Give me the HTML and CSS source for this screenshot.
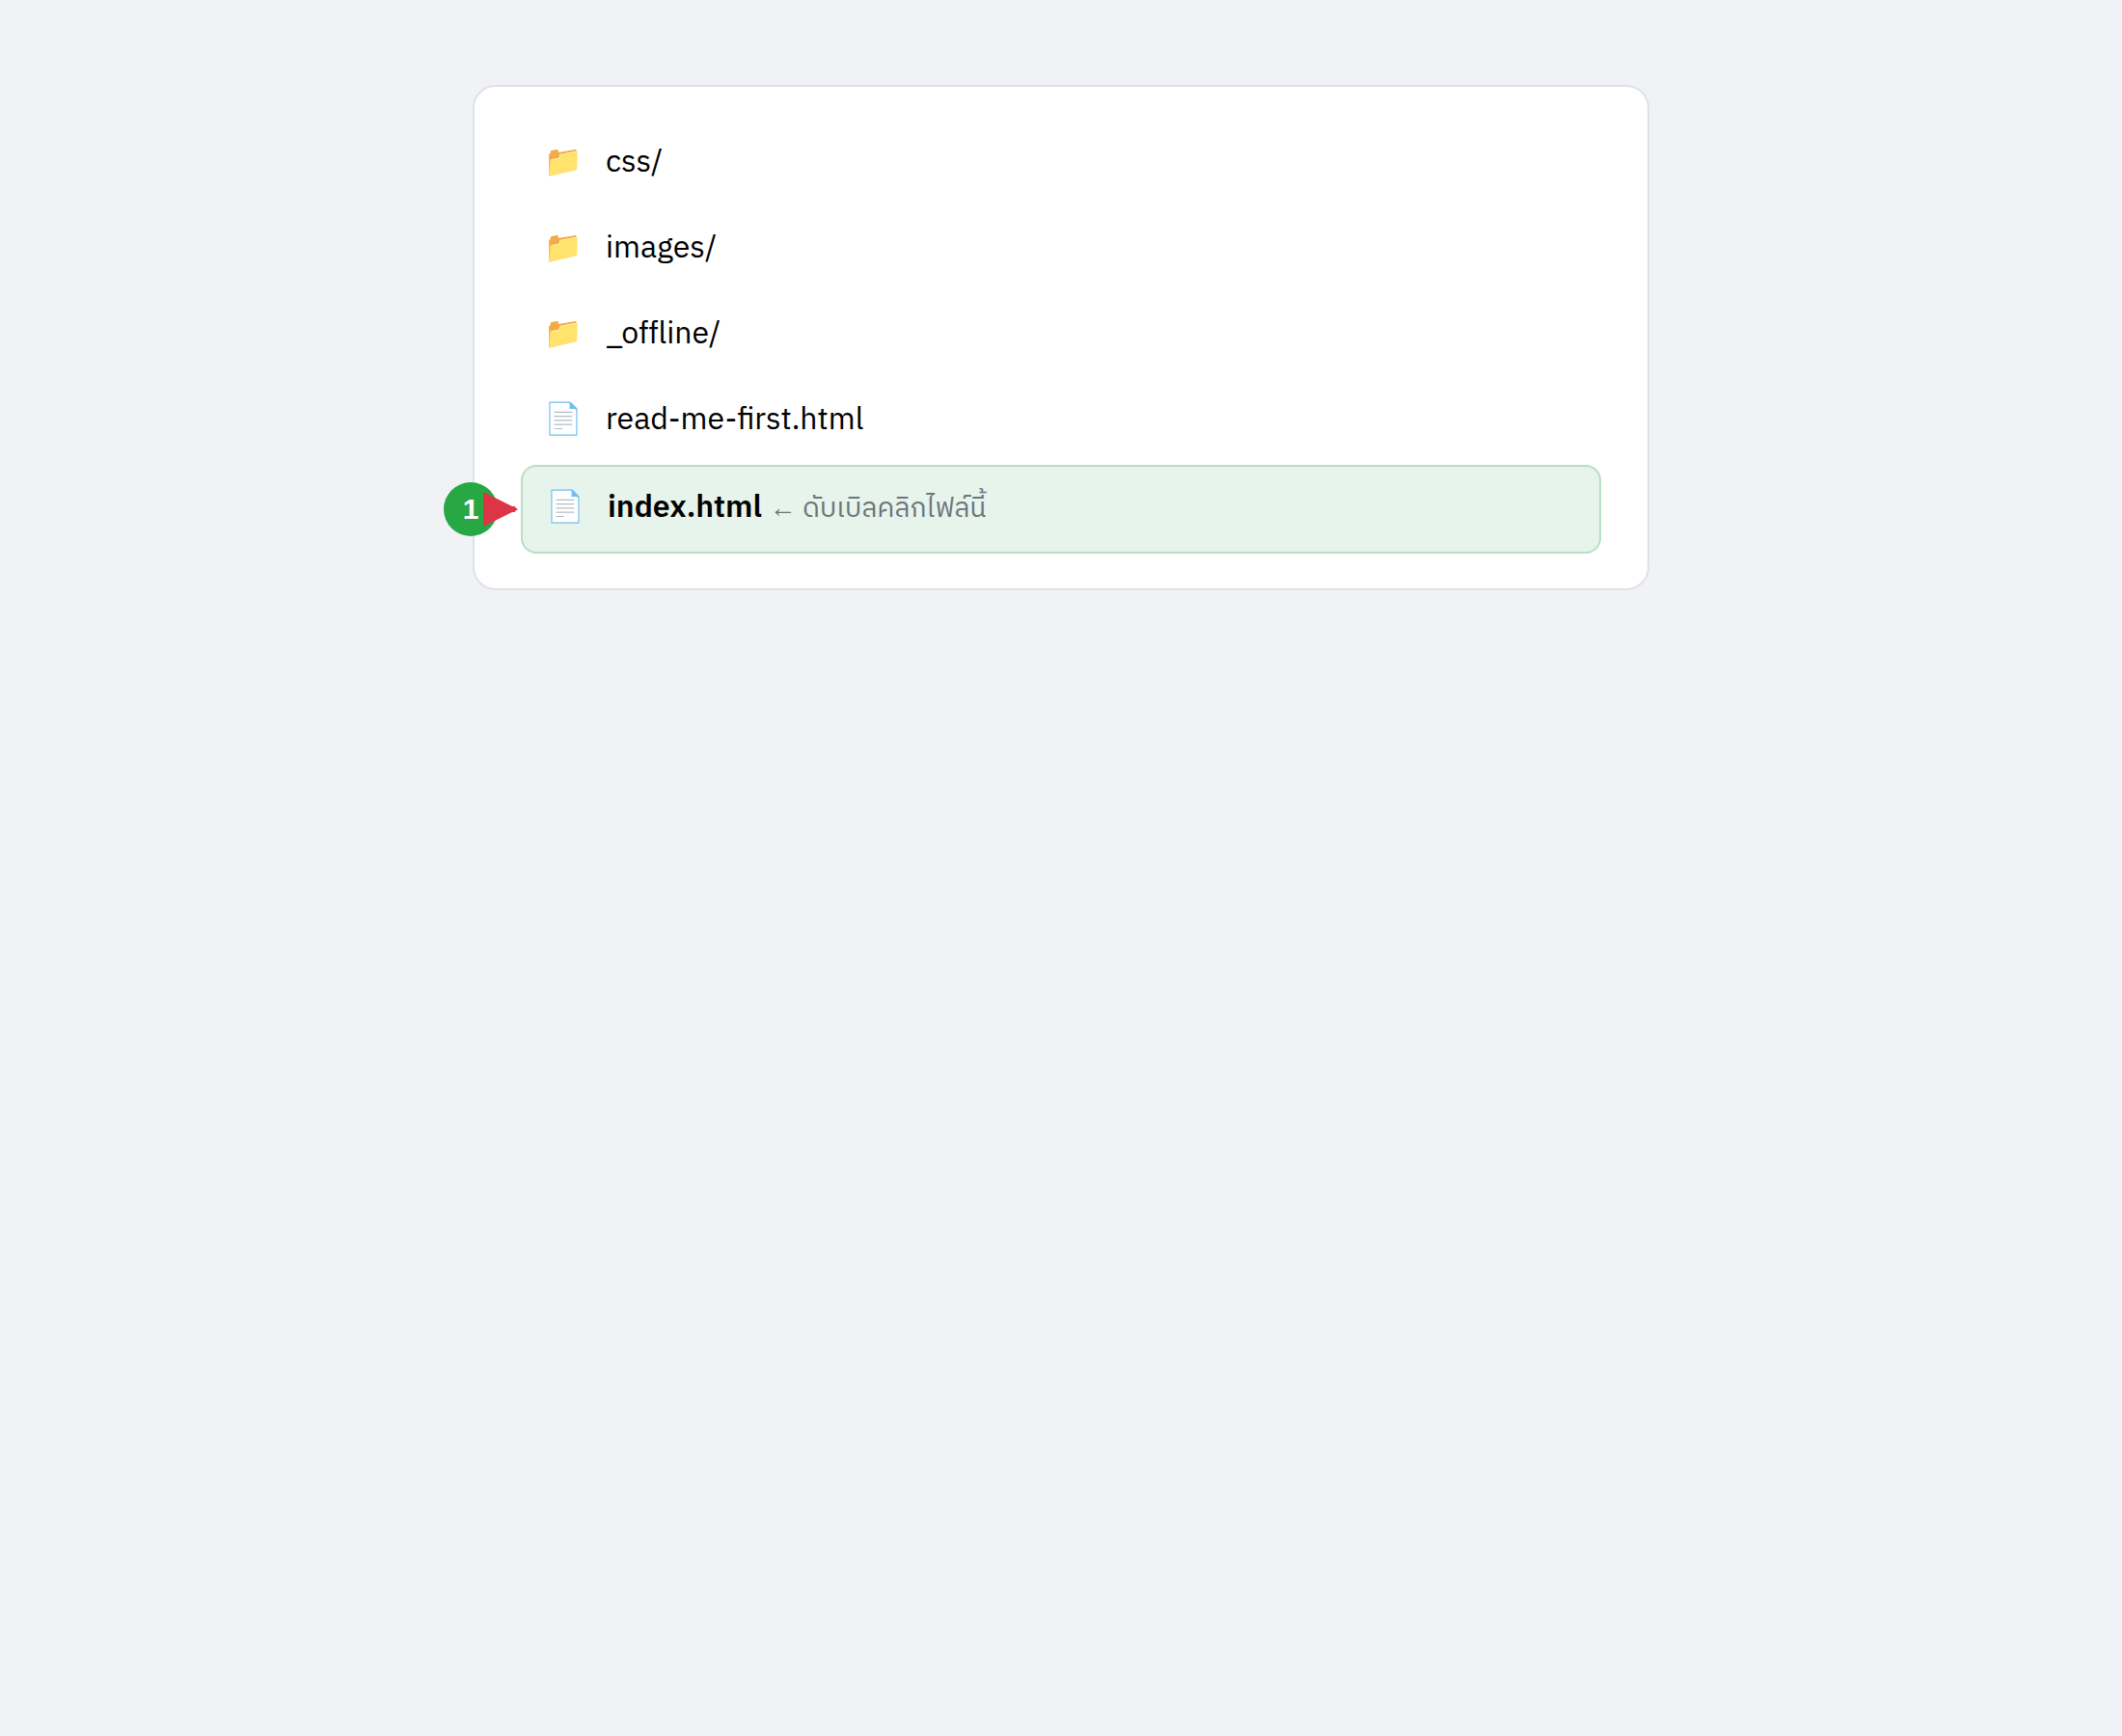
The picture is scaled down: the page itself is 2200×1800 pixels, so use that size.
FILE: index.html
```html
<!DOCTYPE html>
<html lang="th">
<head>
<meta charset="utf-8">
<meta name="viewport" content="width=device-width, initial-scale=1">
<title>index.html</title>
<link rel="stylesheet" href="styles.css">
</head>
<body>
<main class="page">
  <ul class="files">
    <li class="file"><span class="icon" aria-hidden="true">📁</span><span class="name">css/</span></li>
    <li class="file"><span class="icon" aria-hidden="true">📁</span><span class="name">images/</span></li>
    <li class="file"><span class="icon" aria-hidden="true">📁</span><span class="name">_offline/</span></li>
    <li class="file"><span class="icon" aria-hidden="true">📄</span><span class="name">read-me-first.html</span></li>
    <li class="file file-active">
      <span class="icon" aria-hidden="true">📄</span>
      <span class="name"><strong>index.html</strong> <span class="hint"><span class="arrow">←</span> ดับเบิลคลิกไฟล์นี้</span></span>
      <span class="badge">1</span>
      <svg class="pointer" viewBox="0 0 36 36" aria-hidden="true"><path d="M0 0L30 15H33V16L36 18L33 20V21H30L0 36Z"/></svg>
    </li>
  </ul>
</main>
</body>
</html>
```
FILE: styles.css
```css
* {
  box-sizing: border-box;
}

body {
  margin: 0;
  background: #f0f2f5;
  color: #000;
  font-family: "IBM Plex Sans Thai", "IBM Plex Sans", "Noto Sans", sans-serif;
  font-size: 32px;
  line-height: 58px;
}

.page {
  max-width: 1220px;
  margin: 0 auto;
  padding: 88px 0;
}

.files {
  margin: 0;
  padding: 36px 48px;
  list-style: none;
  background: #fff;
  border: 2px solid #dee2e6;
  border-radius: 24px;
}

.file {
  position: relative;
  display: flex;
  gap: 24px;
  min-height: 89px;
  padding: 14px 24px;
}

.file-active {
  min-height: 92px;
  background: #e7f4eb;
  border: 2px solid #b7dfc3;
  border-radius: 16px;
}

.icon {
  flex: 0 0 40px;
  font-size: 32px;
}

strong {
  font-weight: 600;
}

.hint {
  color: #6c757d;
  font-size: 28px;
}

.arrow {
  font-family: "Liberation Sans", sans-serif;
}

.badge {
  position: absolute;
  top: 16px;
  left: -82px;
  width: 56px;
  height: 56px;
  border-radius: 50%;
  background: #28a745;
  color: #fff;
  font-family: "Liberation Sans", sans-serif;
  font-size: 30px;
  font-weight: 700;
  line-height: 56px;
  text-align: center;
}

.pointer {
  position: absolute;
  top: 26px;
  left: -41px;
  width: 36px;
  height: 36px;
  fill: #dc3545;
}
```
